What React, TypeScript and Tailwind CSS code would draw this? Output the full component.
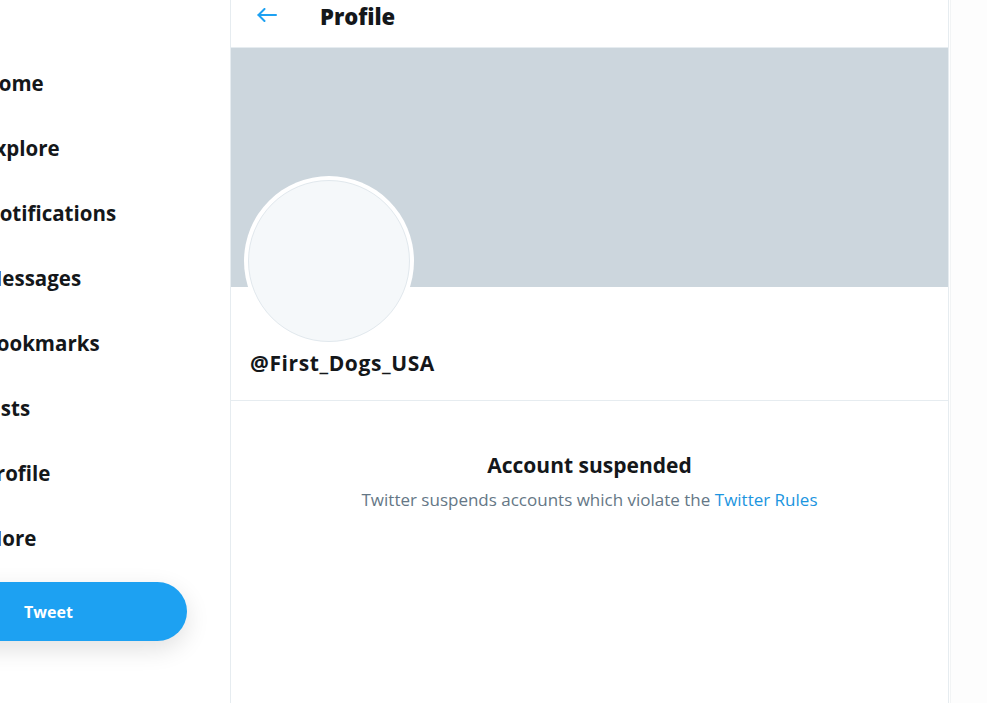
const navItems = [
  "Home",
  "Explore",
  "Notifications",
  "Messages",
  "Bookmarks",
  "Lists",
  "Profile",
  "More",
];

const font = { fontFamily: '"Open Sans", "Noto Sans", sans-serif' };

const SideNav = () => {
  return (
    <div className="w-[230px] shrink-0 h-full overflow-hidden">
      <div className="ml-[-17px] pt-[66px]">
        {navItems.map((item) => (
          <div key={item} className="h-[65px] text-[20.5px] leading-[34px] font-bold text-[#14171a]">
            {item}
          </div>
        ))}
        <div className="mt-[-4px] ml-[-73px] w-[277px] h-[59px] rounded-full bg-[#1da1f2] shadow-[0_8px_24px_rgba(0,0,0,0.12)] flex items-center justify-center text-white font-bold text-[16px]">
          Tweet
        </div>
      </div>
    </div>
  );
};

const BackArrow = () => (
  <svg width="20" height="14" viewBox="0 0 20 14" fill="none" stroke="#1da1f2" strokeWidth="2" strokeLinecap="round" strokeLinejoin="round">
    <path d="M19 7H1.5" />
    <path d="M7.5 1 1.5 7l6 6" />
  </svg>
);

const ProfileColumn = () => {
  return (
    <div className="w-[719px] shrink-0 h-full border-x border-[#e6ecf0] bg-white">
      <div className="h-[48px] border-b border-[#e6ecf0] flex items-start pt-[2px]">
        <div className="ml-[26px] mt-[6px]">
          <BackArrow />
        </div>
        <h2 className="ml-[43px] text-[22px] leading-[28px] font-extrabold text-[#14171a]">Profile</h2>
      </div>
      <div className="h-[239px] bg-[#ccd6dd]" />
      <div className="ml-[13px] mt-[-111px] w-[170px] h-[170px] rounded-full bg-white p-[4px] relative">
        <div className="w-full h-full rounded-full bg-[#f5f8fa] border border-[#e1e8ed]" />
      </div>
      <div className="h-[55px] border-b border-[#e6ecf0] pl-[19px] pt-[2px] text-[21px] leading-[30px] tracking-[0.6px] font-bold text-[#14171a]">
        @First_Dogs_USA
      </div>
      <div className="pt-[49px] text-center">
        <h3 className="text-[21px] leading-[30px] font-bold text-[#14171a]">Account suspended</h3>
        <p className="mt-[8px] text-[17px] leading-[24px] text-[#657786]">
          Twitter suspends accounts which violate the{" "}
          <span className="text-[#1b95e0]">Twitter Rules</span>
        </p>
      </div>
    </div>
  );
};

const App = () => {
  return (
    <div className="w-full h-[703px] flex bg-white overflow-hidden" style={font}>
      <SideNav />
      <ProfileColumn />
      <div className="flex-1 h-full border-l border-[#f2f4f5] ml-[1px] bg-[#fdfdfd]" />
    </div>
  );
};

export default App;
